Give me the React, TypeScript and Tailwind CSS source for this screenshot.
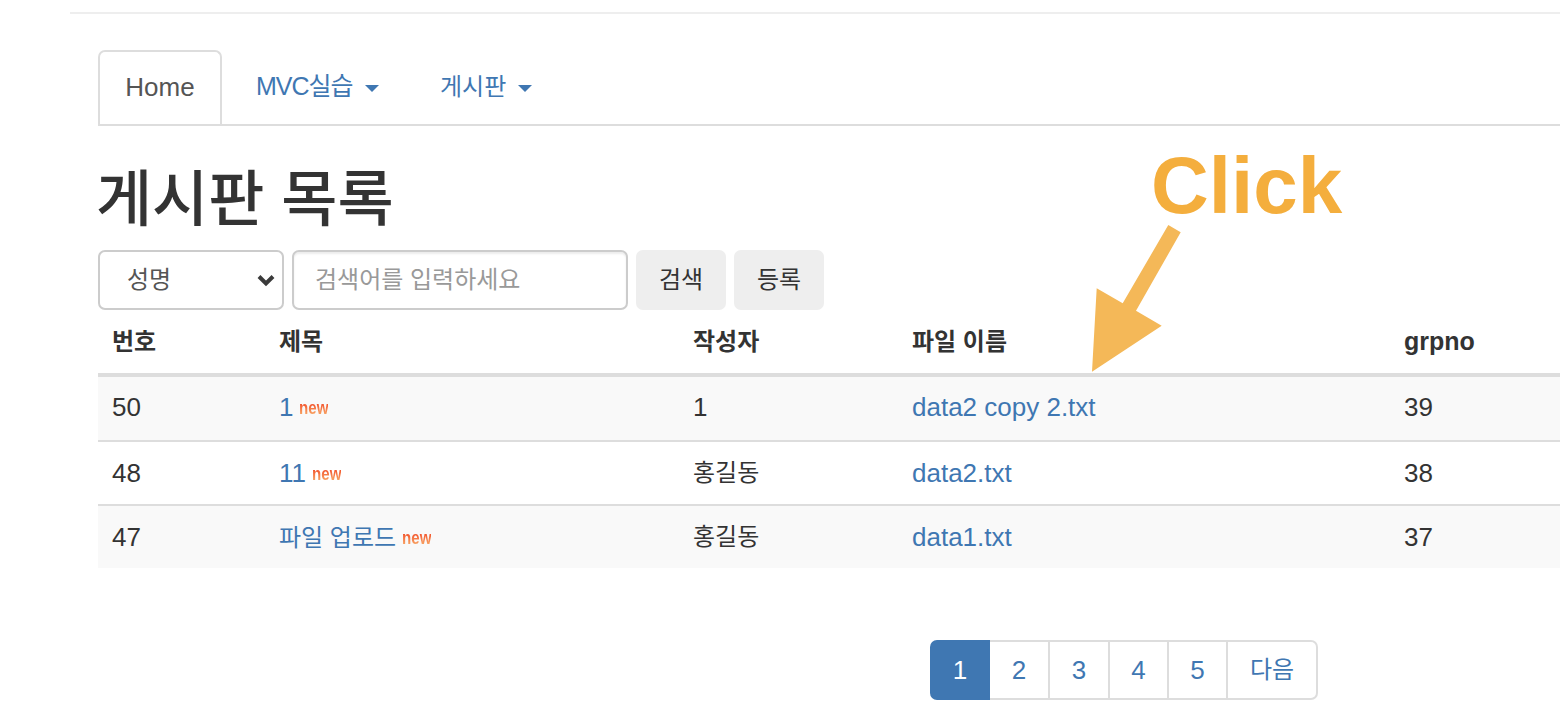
import React from 'react';

const font = { ko: 'font-["Liberation_Sans","Noto_Sans_CJK_KR",sans-serif]' };

const rows = [
    { no: '50', title: '1', writer: '1', file: 'data2 copy 2.txt', grp: '39' },
    { no: '48', title: '11', writer: '홍길동', file: 'data2.txt', grp: '38' },
    { no: '47', title: '파일 업로드', writer: '홍길동', file: 'data1.txt', grp: '37' },
];

function Caret() {
    return <span className="inline-block ml-[12px] mt-[2px] w-0 h-0 border-x-[7px] border-x-transparent border-t-[7px] border-t-[#3f77b2]" />;
}

function NewBadge() {
    return (
        <span className='ml-[6px] inline-block origin-left scale-x-[0.84] align-[2px] text-[18px] leading-[14px] font-bold font-["Liberation_Sans",sans-serif] bg-gradient-to-b from-[#ee3418] to-[#f7a868] bg-clip-text text-transparent'>
            new
        </span>
    );
}

export default function App() {
    return (
        <div className={`relative w-[1560px] h-[728px] overflow-hidden bg-white text-[#333] text-[26px] ${font.ko}`}>
            <div className="pl-[70px] pt-[12px]">
                <div className="h-[2px] bg-[#eeeeee]" />
            </div>

            <div className="pl-[98px] pt-[36px]">
                {/* Tabs */}
                <ul className="flex h-[76px] border-b-2 border-[#dddddd]">
                    <li className="w-[124px] h-[74px] border-2 border-b-0 border-[#dddddd] rounded-t-[7px] bg-white flex items-center justify-center text-[#555555] pb-[2px]">
                        Home
                    </li>
                    <li className="w-[185px] pl-[34px] flex items-center text-[#3f77b2] text-[25px]">
                        <span className="tracking-[-1px]">MVC실습</span>
                        <Caret />
                    </li>
                    <li className="w-[130px] pl-[33px] flex items-center text-[#3f77b2] text-[24px]">
                        <span>게시판</span>
                        <Caret />
                    </li>
                </ul>

                <h2 className="mt-[43px] mb-[19px] -ml-[2px] text-[61px] leading-[62px] font-medium">게시판 목록</h2>

                {/* Search form */}
                <form className="flex h-[60px] gap-[8px]">
                    <div className="relative w-[186px]">
                        <select className="appearance-none w-full h-full pl-[27px] bg-white border-2 border-[#cccccc] rounded-[7px] text-[#555555] text-[24px] outline-none">
                            <option>성명</option>
                        </select>
                        <svg className="absolute right-[9px] top-[24px]" width="18" height="13" viewBox="0 0 18 13">
                            <path d="M2 2.5 L9 9.5 L16 2.5" fill="none" stroke="#3a3a3a" strokeWidth="4" />
                        </svg>
                    </div>
                    <input
                        placeholder="검색어를 입력하세요"
                        className="w-[336px] h-full px-[21px] border-2 border-[#cccccc] rounded-[7px] text-[24px] outline-none shadow-[inset_0_2px_2px_rgba(0,0,0,0.075)] placeholder:text-[#999999]"
                    />
                    <button type="button" className="w-[90px] h-full rounded-[7px] bg-[#eeeeee] text-[24px]">검색</button>
                    <button type="button" className="w-[90px] h-full rounded-[7px] bg-[#eeeeee] text-[24px]">등록</button>
                </form>

                {/* Board table */}
                <table className="table-fixed w-[1462px] border-separate border-spacing-0">
                    <colgroup>
                        <col className="w-[167px]" />
                        <col className="w-[414px]" />
                        <col className="w-[219px]" />
                        <col className="w-[492px]" />
                        <col className="w-[170px]" />
                    </colgroup>
                    <thead>
                        <tr className="text-left text-[24px]">
                            <th className="h-[67px] pl-[14px] border-b-4 border-[#dddddd]">번호</th>
                            <th className="h-[67px] pl-[14px] border-b-4 border-[#dddddd]">제목</th>
                            <th className="h-[67px] pl-[14px] border-b-4 border-[#dddddd]">작성자</th>
                            <th className="h-[67px] pl-[14px] border-b-4 border-[#dddddd]">파일 이름</th>
                            <th className="h-[67px] pl-[14px] border-b-4 border-[#dddddd] text-[25px]">grpno</th>
                        </tr>
                    </thead>
                    <tbody>
                        {rows.map((r, i) => (
                            <tr key={r.no} className={i % 2 === 0 ? 'bg-[#f9f9f9]' : 'bg-white'}>
                                <td className={`pl-[14px] ${i === 0 ? 'h-[63px] pb-[2px]' : 'h-[64px] border-t-2 border-[#dddddd]'}`}>{r.no}</td>
                                <td className={`pl-[14px] text-[#3f77b2] ${i === 0 ? 'h-[63px] pb-[2px]' : 'h-[64px] border-t-2 border-[#dddddd]'}`}>
                                    <span className={i === 2 ? 'text-[24px]' : ''}>{r.title}</span>
                                    <NewBadge />
                                </td>
                                <td className={`pl-[14px] ${i === 0 ? 'h-[63px] pb-[2px]' : 'h-[64px] border-t-2 border-[#dddddd] text-[24px]'}`}>{r.writer}</td>
                                <td className={`pl-[14px] text-[#3f77b2] ${i === 0 ? 'h-[63px] pb-[2px]' : 'h-[64px] border-t-2 border-[#dddddd]'}`}>{r.file}</td>
                                <td className={`pl-[14px] ${i === 0 ? 'h-[63px] pb-[2px]' : 'h-[64px] border-t-2 border-[#dddddd]'}`}>{r.grp}</td>
                            </tr>
                        ))}
                    </tbody>
                </table>

                {/* Pagination */}
                <ul className="mt-[72px] ml-[832px] flex w-[388px] h-[60px] text-[#3f77b2]">
                    <li className="w-[60px] rounded-l-[7px] bg-[#3f77b2] text-white flex items-center justify-center">1</li>
                    <li className="w-[60px] border-y-2 border-r-2 border-[#dddddd] flex items-center justify-center">2</li>
                    <li className="w-[60px] border-y-2 border-r-2 border-[#dddddd] flex items-center justify-center">3</li>
                    <li className="w-[59px] border-y-2 border-r-2 border-[#dddddd] flex items-center justify-center">4</li>
                    <li className="w-[59px] border-y-2 border-r-2 border-[#dddddd] flex items-center justify-center">5</li>
                    <li className="w-[90px] border-y-2 border-r-2 border-[#dddddd] rounded-r-[7px] flex items-center justify-center text-[24px]">다음</li>
                </ul>
            </div>

            {/* Annotation laid over the page */}
            <div className='absolute left-[1151px] top-[140px] text-[80px] leading-[92px] font-bold text-[#f4ae3d] font-["Liberation_Sans",sans-serif]'>Click</div>
            <svg className="absolute left-0 top-0 pointer-events-none" width="1560" height="728" viewBox="0 0 1560 728">
                <polygon
                    points="1168.3,225 1180.7,232.3 1136,310.7 1161.7,325.7 1092,371.7 1096.7,288.3 1122.7,303.3"
                    fill="#f4b858"
                />
            </svg>
        </div>
    );
}
